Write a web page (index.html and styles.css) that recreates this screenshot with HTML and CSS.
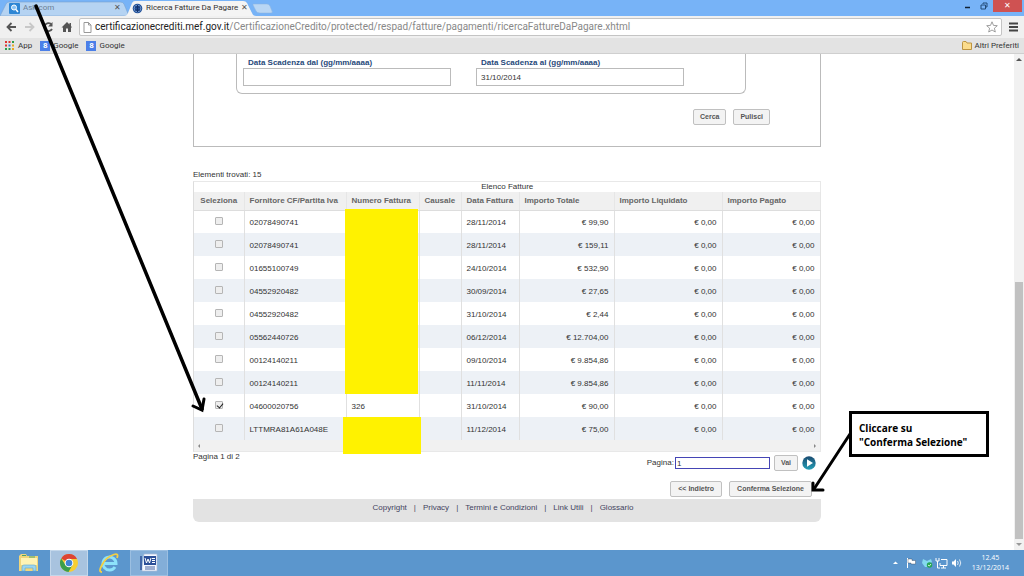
FILE: index.html
```html
<!DOCTYPE html>
<html lang="it">
<head>
<meta charset="utf-8">
<title>Ricerca Fatture Da Pagare</title>
<link rel="stylesheet" href="styles.css">
</head>
<body>
<header class="browser">
  <div class="tabstrip">
    <svg class="tab-shapes" width="280" height="16" viewBox="0 0 280 16">
      <path d="M0 16L6 4Q7 2 9 2H120Q123 2 124 4L129 16Z" fill="#b5d3f2" stroke="#7ba3cf" stroke-width=".6"/>
      <path d="M124 16Q127 16 128 13L132 3Q133 1 135 1H243Q246 1 247 3L252 13Q253 16 256 16Z" fill="#f4f4f4"/>
      <path d="M253 4H267Q269 4 270 6L272 11Q273 13 271 13H260Q257 13 256 11L253 5Z" fill="#b9d6f4" stroke="#8bb3df" stroke-width=".5"/>
    </svg>
    <div class="tab tab-first">
      <svg width="11" height="11" viewBox="0 0 11 11"><rect width="11" height="11" rx="1" fill="#2e86d4"/><circle cx="5" cy="4.500" r="2.500" fill="#8cc4f3" stroke="#fff"/><path d="M7 6.500L9 9" stroke="#fff" stroke-width="1.500"/></svg>
      <span class="tab-title">Ask.com</span><span class="tab-x">✕</span>
    </div>
    <div class="tab tab-active">
      <svg width="11" height="11" viewBox="0 0 11 11"><circle cx="5.500" cy="5.500" r="4.800" fill="#24539a"/><circle cx="5.500" cy="5.500" r="3.300" fill="none" stroke="#8fb2df" stroke-width=".7"/><path d="M5.500 2V9M3 4H8M3 7H8" stroke="#12316b"/></svg>
      <span class="tab-title">Ricerca Fatture Da Pagare</span><span class="tab-x">✕</span>
    </div>
    <div class="window-buttons">
      <svg width="24" height="12" viewBox="0 0 24 12"><path d="M0 7.500H5" stroke="#123" stroke-width="1.500"/><path d="M16 5H20.500V9H16ZM18 4V3H22V7H21" fill="none" stroke="#234a77"/></svg>
      <button class="close" aria-label="Chiudi">✕</button>
    </div>
  </div>
  <div class="toolbar">
    <svg class="nav-icons" width="72" height="18" viewBox="0 0 72 18" fill="none" stroke="#555" stroke-width="1.800">
      <path d="M16 9H8M11.500 5L7.500 9L11.500 13"/><path d="M25 9H33M29.500 5L33.500 9L29.500 13" stroke="#c8c8c8"/>
      <path d="M51 6A4 4 0 1 0 52 11"/><path d="M52.500 4V8.500H48Z" fill="#555" stroke="none"/>
      <path d="M67 4L61.500 9.500H63V14H66V10.500H68V14H71V9.500H72L71 8V5H69.500V6.500Z" fill="#555" stroke="none"/>
    </svg>
    <div class="address">
      <svg width="9" height="11" viewBox="0 0 9 11"><path d="M1 .5H5.500L8 3V10.500H1ZM5.500 .5V3H8" fill="#fff" stroke="#999"/></svg>
      <span class="url"><span class="host">certificazionecrediti.mef.gov.it</span>/CertificazioneCredito/protected/respad/fatture/pagamenti/ricercaFattureDaPagare.xhtml</span>
      <svg class="star" width="12" height="12" viewBox="0 0 12 12"><path d="M6 .8L7.500 4.400L11.300 4.700L8.400 7.200L9.300 11L6 9L2.700 11L3.600 7.200L.7 4.700L4.500 4.400Z" fill="#fff" stroke="#888" stroke-width=".8"/></svg>
    </div>
    <svg width="9" height="10" viewBox="0 0 9 10"><path d="M0 1.500H9M0 5H9M0 8.500H9" stroke="#444" stroke-width="2"/></svg>
  </div>
  <nav class="bookmarks">
    <a href="#"><svg width="10" height="9" viewBox="0 0 10 9"><path d="M0 1H2M0 4.500H2" stroke="#d33" stroke-width="2"/><path d="M3.500 1H5.500" stroke="#d33" stroke-width="2"/><path d="M7 1H9M0 8H2M3.500 8H5.500" stroke="#2a9c4a" stroke-width="2"/><path d="M3.500 4.500H5.500" stroke="#37c" stroke-width="2"/><path d="M7 4.500H9M7 8H9" stroke="#e9a820" stroke-width="2"/></svg>App</a>
    <a href="#"><span class="g-icon">8</span>Google</a>
    <a href="#"><span class="g-icon">8</span>Google</a>
    <a href="#" class="other"><svg width="10" height="9" viewBox="0 0 10 9"><path d="M.5 8.500V1.500Q.5 .5 1.500 .5H4L5 2H9.500V8.500Z" fill="#fbdc8c" stroke="#bd9440"/></svg>Altri Preferiti</a>
  </nav>
</header>

<div class="viewport">
  <main class="page">
    <form class="search">
      <div class="fields">
        <div class="field"><label for="dal">Data Scadenza dal (gg/mm/aaaa)</label><input id="dal" type="text"></div>
        <div class="field"><label for="al">Data Scadenza al (gg/mm/aaaa)</label><input id="al" type="text" value="31/10/2014"></div>
      </div>
      <div class="search-actions"><button type="button" class="btn">Cerca</button><button type="button" class="btn">Pulisci</button></div>
    </form>

    <p class="found">Elementi trovati: 15</p>
    <div class="results">
      <table>
        <caption>Elenco Fatture</caption>
        <colgroup><col class="c1"><col class="c2"><col class="c3"><col class="c4"><col class="c5"><col class="c6"><col class="c7"><col class="c8"></colgroup>
        <thead><tr><th>Seleziona</th><th>Fornitore CF/Partita Iva</th><th>Numero Fattura</th><th>Causale</th><th>Data Fattura</th><th>Importo Totale</th><th>Importo Liquidato</th><th>Importo Pagato</th></tr></thead>
        <tbody>
          <tr><td><input type="checkbox" aria-label="Seleziona 1"></td><td>02078490741</td><td></td><td></td><td>28/11/2014</td><td>€ 99,90</td><td>€ 0,00</td><td>€ 0,00</td></tr>
          <tr><td><input type="checkbox" aria-label="Seleziona 2"></td><td>02078490741</td><td></td><td></td><td>28/11/2014</td><td>€ 159,11</td><td>€ 0,00</td><td>€ 0,00</td></tr>
          <tr><td><input type="checkbox" aria-label="Seleziona 3"></td><td>01655100749</td><td></td><td></td><td>24/10/2014</td><td>€ 532,90</td><td>€ 0,00</td><td>€ 0,00</td></tr>
          <tr><td><input type="checkbox" aria-label="Seleziona 4"></td><td>04552920482</td><td></td><td></td><td>30/09/2014</td><td>€ 27,65</td><td>€ 0,00</td><td>€ 0,00</td></tr>
          <tr><td><input type="checkbox" aria-label="Seleziona 5"></td><td>04552920482</td><td></td><td></td><td>31/10/2014</td><td>€ 2,44</td><td>€ 0,00</td><td>€ 0,00</td></tr>
          <tr><td><input type="checkbox" aria-label="Seleziona 6"></td><td>05562440726</td><td></td><td></td><td>06/12/2014</td><td>€ 12.704,00</td><td>€ 0,00</td><td>€ 0,00</td></tr>
          <tr><td><input type="checkbox" aria-label="Seleziona 7"></td><td>00124140211</td><td></td><td></td><td>09/10/2014</td><td>€ 9.854,86</td><td>€ 0,00</td><td>€ 0,00</td></tr>
          <tr><td><input type="checkbox" aria-label="Seleziona 8"></td><td>00124140211</td><td></td><td></td><td>11/11/2014</td><td>€ 9.854,86</td><td>€ 0,00</td><td>€ 0,00</td></tr>
          <tr><td><input type="checkbox" aria-label="Seleziona 9" checked></td><td>04600020756</td><td>326</td><td></td><td>31/10/2014</td><td>€ 90,00</td><td>€ 0,00</td><td>€ 0,00</td></tr>
          <tr><td><input type="checkbox" aria-label="Seleziona 10"></td><td>LTTMRA81A61A048E</td><td></td><td></td><td>11/12/2014</td><td>€ 75,00</td><td>€ 0,00</td><td>€ 0,00</td></tr>
        </tbody>
      </table>
      <div class="hscroll"><i class="left"></i><i class="right"></i></div>
      <div class="mark mark-top"></div>
      <div class="mark mark-bottom"></div>
    </div>

    <div class="pager">
      <span>Pagina 1 di 2</span>
      <div class="goto">
        <label for="pagina">Pagina:</label><input id="pagina" type="text" value="1">
        <button type="button" class="btn">Vai</button>
        <button type="button" class="next" aria-label="Avanti"><svg width="14" height="14" viewBox="0 0 14 14"><defs><linearGradient id="g" x2="0" y2="1"><stop stop-color="#1a4a70"/><stop offset="1" stop-color="#25a0b8"/></linearGradient></defs><circle cx="7" cy="7" r="6.700" fill="url(#g)"/><path d="M5 3.300L11 7L5 10.700Z" fill="#fff"/></svg></button>
      </div>
    </div>
    <div class="actions"><button type="button" class="btn">&lt;&lt; Indietro</button><button type="button" class="btn">Conferma Selezione</button></div>
    <footer class="links"><a href="#">Copyright</a><span>|</span><a href="#">Privacy</a><span>|</span><a href="#">Termini e Condizioni</a><span>|</span><a href="#">Link Utili</a><span>|</span><a href="#">Glossario</a></footer>
  </main>
  <div class="vscroll"><i class="up"></i><div class="thumb"></div><i class="down"></i></div>
</div>

<footer class="taskbar">
  <button class="task" aria-label="Esplora file"><svg width="22" height="20" viewBox="0 0 22 20"><path d="M1 3L3 1H8L9 3H20V18H1Z" fill="#f0d67c"/><path d="M3 5H19V12H3Z" fill="#fff3b4"/><path d="M4 2.500H8M11 4H17" stroke="#4aa46b"/><path d="M4 18V14Q4 12 6 12H16Q18 12 18 14V18H15V15H7V18Z" fill="#9cd5ef" stroke="#5aa9d4" stroke-width=".6"/></svg></button>
  <button class="task active" aria-label="Chrome"><svg width="20" height="20" viewBox="0 0 20 20"><circle cx="10" cy="10" r="9" fill="#f6ce32"/><path d="M10 10L2.200 5.500A9 9 0 0 1 18 6H10Z" fill="#dd4433"/><path d="M2.200 5.500A9 9 0 0 0 9.500 19L13.500 12L10 10L6.500 12Z" fill="#3b9e4b"/><circle cx="10" cy="10" r="4.300" fill="#fff"/><circle cx="10" cy="10" r="3.300" fill="#3f84d6"/></svg></button>
  <button class="task" aria-label="Internet Explorer"><svg width="22" height="20" viewBox="0 0 22 20" fill="none"><path d="M17 14A6.500 6.500 0 1 1 18 10.500H6" stroke="#8de2fa" stroke-width="3"/><path d="M4 19Q0 19 4 12Q8 4 16 1.500Q21 0 19 5" stroke="#f4cf42" stroke-width="1.800"/></svg></button>
  <button class="task open" aria-label="Word"><svg width="20" height="20" viewBox="0 0 20 20"><path d="M5 1H18V18H3V14Z" fill="#f5f8ff" stroke="#a9b9d6" stroke-width=".7"/><path d="M6 14H16M6 16H16" stroke="#4865a3"/><path d="M5 3H17V12H5Z" fill="#2c4f98"/><path d="M6 5L7.500 10L9 6L10.500 10L12 5M13 5.500H16M13 7.500H16M13 9.500H16" fill="none" stroke="#fff"/><path d="M2 3V17" stroke="#2c4f98" stroke-width="1.500"/></svg></button>
  <div class="tray">
    <svg width="70" height="14" viewBox="0 0 70 14" fill="none" stroke="#fff"><path d="M1 8L3.500 5.500L6 8Z" fill="#fff" stroke="none"/><path d="M15.500 2V12"/><path d="M16 3H20V4.500H23.500V8H19V7H16Z" fill="#fff" stroke="#345" stroke-width=".4"/><path d="M31 3L35 5L39 3L40 6L37 8L38 11H33L30 7Z" fill="#84d8ee" stroke="none"/><circle cx="37.500" cy="9" r="2.700" fill="#24a653" stroke="none"/><path d="M36 9L37.300 10L39 8" stroke-width=".8"/><path d="M49 3.500H55V9.500H48V7M49 12H54M51.500 10V12M44 2V5H47V2M45.500 5V12H48"/><path d="M60 5.500H61.500L64 3V11L61.500 8.500H60Z" fill="#fff" stroke="none"/><path d="M65.500 5Q67 7 65.500 9M67.500 3.500Q70 7 67.500 10.500" stroke-width=".8"/></svg>
    <div class="clock"><span>12.45</span><span>13/12/2014</span></div>
  </div>
</footer>

<svg class="arrows" width="1024" height="576" viewBox="0 0 1024 576" fill="none" stroke="#000" stroke-linecap="round">
  <path d="M36 6L202 409" stroke-width="3.500"/><path d="M193 406L202 410L204 399" stroke-width="3"/>
  <path d="M850 434L814 489" stroke-width="3"/><path d="M813 483V490H823" stroke-width="3"/>
</svg>
<div class="callout">Cliccare su<br>"Conferma Selezione"</div>
</body>
</html>
```
FILE: styles.css
```css
* { box-sizing: border-box; }
body {
  margin: 0;
  height: 100vh;
  display: flex;
  flex-direction: column;
  overflow: hidden;
  position: relative;
  background: #fff;
  color: #333;
  font: 8px/10px "Liberation Sans", Arial, sans-serif;
}
button, input { font: inherit; color: inherit; margin: 0; }
a { color: inherit; text-decoration: none; }
svg { display: block; flex: none; }

.browser { background: #e3e3e3; border-bottom: 1px solid #cfcfcf; font-family: Roboto, "Noto Sans", sans-serif; }
.tabstrip { position: relative; height: 16px; display: flex; align-items: center; background: #77b3f7; }
.tab-shapes { position: absolute; left: 0; top: 0; }
.tab { position: relative; display: flex; align-items: center; gap: 3px; height: 16px; }
.tab-first { width: 123px; padding: 0 0 0 9px; color: #6c7f94; }
.tab-active { width: 123px; padding: 0 0 0 9px; }
.tab-title { flex: 1; white-space: nowrap; }
.tab-x { width: 9px; color: #555; }
.window-buttons { margin-left: auto; display: flex; align-items: center; gap: 4px; padding-right: 2px; align-self: flex-start; }
.close { width: 29px; height: 12px; padding: 0; border: 0; background: #cf5252; color: #fff; line-height: 12px; }
.toolbar { height: 22px; display: flex; align-items: center; gap: 7px; padding-right: 6px; background: #f0f0f0; }
.address { flex: 1; height: 18px; display: flex; align-items: center; gap: 3px; padding: 0 3px; background: #fff; border: 1px solid #c4c4c4; border-radius: 2px; }
.url { flex: 1; font-size: 10px; line-height: 14px; color: #888; white-space: nowrap; }
.host { color: #222; }
.bookmarks { height: 15px; display: flex; align-items: center; gap: 8px; padding: 0 5px; }
.bookmarks a { display: flex; align-items: center; gap: 3px; }
.bookmarks .other { margin-left: auto; }
.g-icon { width: 10px; height: 10px; background: #4b7fe8; color: #fff; text-align: center; font-weight: 700; }

.viewport { flex: 1; min-height: 0; display: flex; overflow: hidden; }
.page { flex: 1; max-width: 628px; margin: 0 auto; }
.search { height: 93px; border: 1px solid #bbb; border-top: 0; }
.fields { display: flex; gap: 25px; height: 40px; margin: 0 74px 0 42px; padding: 4px 6px 0; border: 1px solid #bbb; border-top: 0; border-radius: 0 0 6px 6px; }
.field { width: 208px; display: flex; flex-direction: column; }
.field label { padding-left: 5px; font-weight: 700; color: #27497a; }
.field input { height: 18px; padding: 0 4px; border: 1px solid #bbb; }
.search-actions { display: flex; justify-content: flex-end; gap: 7px; padding: 15px 50px 0 0; }
.btn { height: 16px; padding: 0 6px; border: 1px solid #c0c0c0; border-radius: 2px; background: #f3f3f3; color: #555; font-weight: 700; font-size: 7px; }

.found { margin: 23px 0 1px; }
.results { position: relative; border: 1px solid #e8e8e8; border-left-color: #ddd; }
table { width: 100%; table-layout: fixed; border-collapse: collapse; }
caption { height: 10px; }
.c1 { width: 50px; } .c2 { width: 102px; } .c3 { width: 73px; } .c4 { width: 42px; } .c5 { width: 58px; } .c6 { width: 95px; } .c7 { width: 108px; } .c8 { width: 98px; }
th { height: 18px; padding: 0 5px; background: #f0f0f0; border-bottom: 1px solid #ddd; color: #666; text-align: left; white-space: nowrap; }
th:first-child { text-align: center; }
td { height: 23px; padding: 2px 5px 0; border-right: 1px solid #e0e0e0; white-space: nowrap; }
th { border-right: 1px solid #e6e6e6; }
tbody tr:nth-child(even) { background: #edf1f6; }
td:nth-child(n+6) { text-align: right; }
td:first-child { text-align: center; padding: 0 0 2px; }
input[type="checkbox"] { appearance: none; display: block; width: 8px; height: 8px; margin: 0 auto; border: 1px solid #b5b5b5; border-radius: 1px; background: #eee; }
input[type="checkbox"]:checked::after { content: ""; display: block; width: 3px; height: 5px; margin-left: 2px; border: solid #222; border-width: 0 1px 1px 0; transform: rotate(40deg); }
.hscroll { height: 11px; display: flex; align-items: center; justify-content: space-between; padding: 0 4px; background: #f1f1f1; }
.left, .right { border: 2px solid transparent; }
.left { border-right-color: #888; border-left: 0; }
.right { border-left-color: #888; border-right: 0; }
.mark { position: absolute; background: #fff200; }
.mark-top { left: 151px; top: 27px; width: 73px; height: 185px; }
.mark-bottom { left: 149px; top: 235px; width: 78px; height: 37px; }

.pager { display: flex; justify-content: space-between; }
.goto { display: flex; align-items: center; gap: 4px; padding: 3px 5px 0 0; }
.goto label { margin-right: -3px; }
.goto input { width: 95px; height: 12px; padding: 0 1px; border: 1px solid #4545b5; }
.next { padding: 0; border: 0; background: none; }
.actions { display: flex; justify-content: flex-end; gap: 7px; padding: 10px 9px 0 0; }
.actions .btn { padding: 0 7px; }
.links { display: flex; justify-content: center; gap: 7px; height: 23px; margin-top: 2px; padding: 4px 8px 0 0; background: #e3e3e3; border-radius: 0 0 6px 6px; color: #44445f; }

.vscroll { width: 10px; display: flex; flex-direction: column; align-items: center; padding: 4px 0; background: #f1f1f1; }
.up, .down { border: 3px solid transparent; }
.up { border-bottom-color: #555; border-top: 0; }
.down { border-top-color: #999; border-bottom: 0; }
.thumb { width: 8px; height: 257px; margin: auto 0 4px; background: #c1c1c1; }

.taskbar { height: 26px; display: flex; align-items: center; padding-left: 10px; gap: 2px; background: #5b96cd; }
.task { width: 38px; height: 26px; padding: 0; display: flex; justify-content: center; align-items: center; border: 0; background: none; }
.active { background: #a8c3df; border: 1px solid #c3d7eb; }
.open { background: #83aed8; border: 1px solid #9cbfe1; }
.tray { margin-left: auto; display: flex; align-items: center; gap: 10px; padding-right: 15px; color: #fff; font-family: "Open Sans", "Noto Sans", sans-serif; }
.clock { display: flex; flex-direction: column; align-items: center; font-size: 7px; }

.arrows { position: absolute; left: 0; top: 0; pointer-events: none; }
.callout { position: absolute; left: 849px; top: 411px; width: 140px; height: 46px; padding: 7px; border: 3px solid #000; background: #fff; color: #000; font: 700 10px/14px "Open Sans", "Noto Sans", sans-serif; white-space: nowrap; }
```
